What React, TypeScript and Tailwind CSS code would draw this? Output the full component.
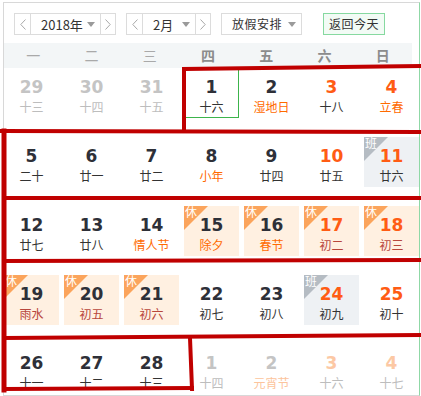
import React from "react";

type Cell = {
  n: string;
  l: string;
  other?: boolean;
  wk?: boolean;
  lc?: "fest" | "hol";
  tag?: "休" | "班";
  today?: boolean;
};

const days: Cell[] = [
  { n: "29", l: "十三", other: true },
  { n: "30", l: "十四", other: true },
  { n: "31", l: "十五", other: true },
  { n: "1", l: "十六", today: true },
  { n: "2", l: "湿地日", lc: "fest" },
  { n: "3", l: "十八", wk: true },
  { n: "4", l: "立春", wk: true, lc: "fest" },
  { n: "5", l: "二十" },
  { n: "6", l: "廿一" },
  { n: "7", l: "廿二" },
  { n: "8", l: "小年", lc: "fest" },
  { n: "9", l: "廿四" },
  { n: "10", l: "廿五", wk: true },
  { n: "11", l: "廿六", wk: true, tag: "班" },
  { n: "12", l: "廿七" },
  { n: "13", l: "廿八" },
  { n: "14", l: "情人节", lc: "fest" },
  { n: "15", l: "除夕", lc: "fest", tag: "休" },
  { n: "16", l: "春节", lc: "fest", tag: "休" },
  { n: "17", l: "初二", wk: true, lc: "hol", tag: "休" },
  { n: "18", l: "初三", wk: true, lc: "hol", tag: "休" },
  { n: "19", l: "雨水", lc: "hol", tag: "休" },
  { n: "20", l: "初五", lc: "hol", tag: "休" },
  { n: "21", l: "初六", lc: "hol", tag: "休" },
  { n: "22", l: "初七" },
  { n: "23", l: "初八" },
  { n: "24", l: "初九", wk: true, tag: "班" },
  { n: "25", l: "初十", wk: true },
  { n: "26", l: "十一" },
  { n: "27", l: "十二" },
  { n: "28", l: "十三" },
  { n: "1", l: "十四", other: true },
  { n: "2", l: "元宵节", other: true, lc: "fest" },
  { n: "3", l: "十六", other: true, wk: true },
  { n: "4", l: "十七", other: true, wk: true },
];

const weekdays = ["一", "二", "三", "四", "五", "六", "日"];

function numColor(c: Cell) {
  if (c.other && c.wk) return "text-[#fcc8a4]";
  if (c.other) return "text-[#c4c4c4]";
  if (c.wk) return "text-[#ff5c14]";
  return "text-[#2e3038]";
}

function lunarColor(c: Cell) {
  if (c.other && c.lc === "fest") return "text-[#fcc49c]";
  if (c.other) return "text-[#bdbdbd]";
  if (c.lc === "fest") return "text-[#ff6a00]";
  if (c.lc === "hol") return "text-[#b8463c]";
  return "text-[#333]";
}

function cellBg(c: Cell) {
  if (c.tag === "休") return "bg-[#fff0e1]";
  if (c.tag === "班") return "bg-[#eef1f4]";
  return "";
}

const Chevron = ({ dir }: { dir: "l" | "r" }) => (
  <svg width="6" height="11" viewBox="0 0 6 11" fill="none">
    <path
      d={dir === "l" ? "M5.5 0.5 L0.8 5.5 L5.5 10.5" : "M0.5 0.5 L5.2 5.5 L0.5 10.5"}
      stroke="#a8a8a8"
      strokeWidth="1"
    />
  </svg>
);

const Caret = () => (
  <svg width="8" height="5" viewBox="0 0 8 5">
    <path d="M0 0 H8 L4 5 Z" fill="#9a9a9a" />
  </svg>
);

const Stepper = ({ label, mid }: { label: string; mid: string }) => (
  <div className="flex h-[22px] border border-[#dcdcdc] bg-white">
    <div className="flex w-[16px] items-center justify-center border-r border-[#dcdcdc]">
      <Chevron dir="l" />
    </div>
    <div className={`flex items-center justify-between pl-[10px] pr-[5px] ${mid}`}>
      <span className="text-[13px] leading-none text-[#333]">{label}</span>
      <Caret />
    </div>
    <div className="flex w-[15px] items-center justify-center border-l border-[#dcdcdc]">
      <Chevron dir="r" />
    </div>
  </div>
);

export default function App() {
  return (
    <div
      className="relative h-[396px] w-[421px] overflow-hidden bg-white"
      style={{ fontFamily: '"Noto Sans CJK SC", "Liberation Sans", sans-serif' }}
    >
      <div className="ml-[3px] mt-[2px] h-[394px] w-[417px] border border-[#d8d8d8] border-r-[#8fd8a6]">
        {/* toolbar */}
        <div className="flex items-center pl-[10px] pt-[10px]">
          <Stepper label="2018年" mid="w-[69px]" />
          <div className="ml-[10px]">
            <Stepper label="2月" mid="w-[52px]" />
          </div>
          <div className="ml-[10px] flex h-[22px] w-[81px] items-center border border-[#dcdcdc] pl-[10px]">
            <span className="text-[12px] leading-none tracking-[0.5px] text-[#333]">放假安排</span>
            <span className="ml-[6px] flex">
              <Caret />
            </span>
          </div>
          <div className="ml-[21px] flex h-[22px] w-[62px] items-center justify-center border border-[#86d9a0] bg-[#f2fbf5]">
            <span className="text-[12px] leading-none tracking-[0.5px] text-[#333]">返回今天</span>
          </div>
        </div>

        {/* weekday header */}
        <div className="mt-[8px] grid h-[25px] w-[408px] grid-cols-7 bg-[#f3f6f7]">
          {weekdays.map((w, i) => (
            <div
              key={w}
              className={`flex items-center justify-center text-[14px] ${
                i < 3 ? "text-[#a9a9a9]" : "font-bold text-[#8c8c8c]"
              }`}
            >
              {w}
            </div>
          ))}
        </div>

        {/* days */}
        <div className="grid w-[415px] grid-cols-[repeat(7,55px)] grid-rows-[repeat(5,50px)] gap-x-[5px] gap-y-[19px]">
          {days.map((c, i) => (
            <div
              key={i}
              className={`relative flex flex-col items-center ${cellBg(c)} ${
                c.today ? "border border-[#3cb44b] pt-[7px]" : "pt-[8px]"
              }`}
            >
              {c.tag && (
                <div
                  className={`absolute left-0 top-0 h-[24px] w-[24px] [clip-path:polygon(0_0,100%_0,0_100%)] ${
                    c.tag === "休" ? "bg-[#fba45c]" : "bg-[#b5bcc3]"
                  }`}
                >
                  <span className="absolute left-[1px] top-[-1px] text-[12px] leading-[14px] text-white">
                    {c.tag}
                  </span>
                </div>
              )}
              <span
                className={`relative text-[17px] font-bold leading-[22px] ${numColor(c)}`}
                style={{ fontFamily: '"DejaVu Sans", sans-serif' }}
              >
                {c.n}
              </span>
              <span className={`mt-[1px] text-[12px] leading-[16px] ${lunarColor(c)}`}>{c.l}</span>
            </div>
          ))}
        </div>
      </div>

      {/* hand-drawn annotation */}
      <svg
        className="pointer-events-none absolute left-0 top-0"
        width="421"
        height="396"
        viewBox="0 0 421 396"
        fill="none"
        stroke="#c00000"
        strokeWidth="4"
        strokeLinecap="square"
      >
        <path d="M184 130 L184 69 L420 66" />
        <path d="M2 131 L420 132" />
        <path d="M4 131 L4 390" strokeWidth="5" />
        <path d="M4 198 L420 198" />
        <path d="M4 261 L420 260" />
        <path d="M4 338 L420 335" />
        <path d="M190 338 L192 389" />
        <path d="M4 389 L192 388" />
      </svg>
    </div>
  );
}
